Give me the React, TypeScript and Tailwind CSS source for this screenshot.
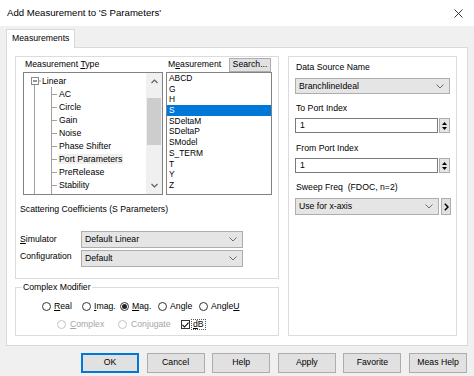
import React from "react";

function Chevron() {
  return (
    <svg width="8" height="5" viewBox="0 0 8 5">
      <path d="M0.5 0.5 L4 4 L7.5 0.5" fill="none" stroke="#6d6d6d" strokeWidth="1" />
    </svg>
  );
}

function Combo({ children, className = "" }: { children: React.ReactNode; className?: string }) {
  return (
    <div
      className={`flex items-center justify-between border border-[#adadad] bg-[#e5e5e5] pl-[3px] pr-[5px] ${className}`}
    >
      <span className="leading-none">{children}</span>
      <Chevron />
    </div>
  );
}

function Spin() {
  return (
    <div className="flex h-[15px] items-stretch gap-[1px]">
      <div className="w-[143px] border border-[#7a7a7a] bg-white pl-[4px] leading-[13px]">1</div>
      <div className="flex w-[11px] flex-col items-center justify-center gap-[2px] border border-[#adadad] bg-[#e5e5e5]">
        <svg width="5" height="3" viewBox="0 0 5 3">
          <path d="M0 3 L2.5 0 L5 3Z" fill="#000" />
        </svg>
        <svg width="5" height="3" viewBox="0 0 5 3">
          <path d="M0 0 L2.5 3 L5 0Z" fill="#000" />
        </svg>
      </div>
    </div>
  );
}

function Radio({ checked = false, disabled = false }: { checked?: boolean; disabled?: boolean }) {
  return (
    <span
      className={`flex h-[9px] w-[9px] shrink-0 items-center justify-center rounded-full border bg-white ${
        disabled ? "border-[#c4c4c4]" : "border-[#333333]"
      }`}
    >
      {checked && <span className="h-[5px] w-[5px] rounded-full bg-[#222222]" />}
    </span>
  );
}

const treeItems = [
  "AC",
  "Circle",
  "Gain",
  "Noise",
  "Phase Shifter",
  "Port Parameters",
  "PreRelease",
  "Stability",
  "TDR",
];

const measItems = ["ABCD", "G", "H", "S", "SDeltaM", "SDeltaP", "SModel", "S_TERM", "T", "Y", "Z"];

function Tree() {
  const rowH = 13;
  return (
    <div className="relative h-[123px] w-[140px] overflow-hidden border border-[#828282] bg-white">
      <svg className="absolute left-0 top-0" width="121" height="121" viewBox="0 0 121 121">
        <rect x="7.5" y="4.5" width="7" height="7" fill="#fff" stroke="#8a8a8a" />
        <line x1="9" y1="8" x2="13" y2="8" stroke="#333" />
        <line x1="15" y1="8" x2="17" y2="8" stroke="#a0a0a0" />
        <line x1="10.5" y1="12" x2="10.5" y2="121" stroke="#a0a0a0" />
        <line x1="27.5" y1="14" x2="27.5" y2="121" stroke="#a0a0a0" />
        {treeItems.map((_, i) => {
          const y = 1 + rowH * (i + 1) + 7;
          return <line key={i} x1="27.5" y1={y + 0.5} x2="33" y2={y + 0.5} stroke="#a0a0a0" />;
        })}
      </svg>
      <div className="relative pt-[1px]">
        <div className="h-[13px] pl-[18px] leading-[14px]">Linear</div>
        {treeItems.map((t) => (
          <div key={t} className="h-[13px] pl-[34px] leading-[14px]">
            <span className={t === "Port Parameters" ? "bg-[#f0f0f0] px-[1px]" : "px-[1px]"}>{t}</span>
          </div>
        ))}
      </div>
      <div className="absolute right-0 top-0 flex h-full w-[16px] flex-col items-center bg-[#f0f0f0]">
        <div className="flex h-[17px] items-center justify-center">
          <svg width="7" height="5" viewBox="0 0 7 5">
            <path d="M0.5 4 L3.5 1 L6.5 4" fill="none" stroke="#606060" strokeWidth="1.2" />
          </svg>
        </div>
        <div className="mt-[8px] h-[47px] w-[14px] bg-[#cdcdcd]" />
        <div className="flex-1" />
        <div className="flex h-[17px] items-center justify-center">
          <svg width="7" height="5" viewBox="0 0 7 5">
            <path d="M0.5 1 L3.5 4 L6.5 1" fill="none" stroke="#606060" strokeWidth="1.2" />
          </svg>
        </div>
      </div>
    </div>
  );
}

function MeasList() {
  return (
    <div className="h-[123px] w-[106px] overflow-hidden border border-[#828282] bg-white text-[8.4px]">
      {measItems.map((m) => (
        <div
          key={m}
          className={`h-[10.7px] pl-[2px] leading-[10.7px] ${m === "S" ? "bg-[#0078d7] text-white" : ""}`}
        >
          {m}
        </div>
      ))}
    </div>
  );
}

function Btn({ children, primary = false }: { children: React.ReactNode; primary?: boolean }) {
  return (
    <div
      className={`flex h-[20px] w-[58px] items-center justify-center bg-[#e1e1e1] ${
        primary ? "border-2 border-[#0078d7]" : "border border-[#adadad]"
      }`}
    >
      {children}
    </div>
  );
}

export default function App() {
  return (
    <div className="h-[376px] w-[474px] overflow-hidden bg-[#f0f0f0] font-['Liberation_Sans',Arial,sans-serif] text-[8.7px] text-black">
      {/* Title bar */}
      <div className="flex h-[26px] items-center justify-between bg-white pl-[7px] pr-[11px]">
        <span className="text-[9.6px]">Add Measurement to 'S Parameters'</span>
        <svg width="9" height="9" viewBox="0 0 9 9">
          <path d="M0.5 0.5 L8.5 8.5 M8.5 0.5 L0.5 8.5" stroke="#222" strokeWidth="0.9" />
        </svg>
      </div>

      <div className="px-[6px] pt-[3px]">
        {/* Tab */}
        <div className="relative z-10 -mb-px flex h-[19px] w-[69px] items-center border border-b-0 border-[#d9d9d9] bg-white pl-[5px]">
          Measurements
        </div>
        {/* Panel */}
        <div className="flex h-[299px] gap-[9px] border border-[#d9d9d9] bg-white pl-[8px] pt-[8px]">
          {/* Left column */}
          <div className="flex w-[264px] flex-col gap-[8px]">
            <div className="h-[223px] border border-[#dcdcdc]">
              <div className="ml-[7px] mt-[1px] flex h-[14px] items-center">
                <div className="w-[143px] pl-[2px]">
                  Measurement <u>T</u>ype
                </div>
                <div className="flex w-[106px] items-center justify-between">
                  <span className="pl-[2px]">
                    M<u>e</u>asurement
                  </span>
                  <div className="mr-[1px] flex h-[14px] w-[42px] items-center justify-center border border-[#adadad] bg-[#e1e1e1]">
                    Search...
                  </div>
                </div>
              </div>
              <div className="ml-[7px] flex gap-[3px]">
                <Tree />
                <MeasList />
              </div>
              <div className="mt-[9px] h-[11px] pl-[4px] leading-[11px]">Scattering Coefficients (S Parameters)</div>
              <div className="mt-[16px] flex h-[17px] items-center pl-[4px]">
                <span className="w-[61px]">
                  <u>S</u>imulator
                </span>
                <Combo className="h-[17px] w-[162px]">Default Linear</Combo>
              </div>
              <div className="mt-[2px] flex h-[17px] items-center pl-[4px]">
                <span className="w-[61px] -translate-y-[2px]">
                  Confi<u>g</u>uration
                </span>
                <Combo className="h-[17px] w-[162px]">Default</Combo>
              </div>
            </div>

            {/* Complex Modifier */}
            <div className="relative h-[49px] border border-[#dcdcdc]">
              <span className="absolute -top-[6px] left-[6px] bg-white px-[1px] leading-[11px]">Complex Modifier</span>
              <div className="flex h-[11px] items-center pl-[26px] pt-0 mt-[13px]">
                <div className="flex w-[40px] items-center gap-[3px]">
                  <Radio />
                  <span>
                    <u>R</u>eal
                  </span>
                </div>
                <div className="flex w-[38px] items-center gap-[3px]">
                  <Radio />
                  <span>
                    <u>I</u>mag.
                  </span>
                </div>
                <div className="flex w-[38px] items-center gap-[3px]">
                  <Radio checked />
                  <span>
                    <u>M</u>ag.
                  </span>
                </div>
                <div className="flex w-[41px] items-center gap-[3px]">
                  <Radio />
                  <span>Angle</span>
                </div>
                <div className="flex items-center gap-[3px]">
                  <Radio />
                  <span>
                    Angle<u>U</u>
                  </span>
                </div>
              </div>
              <div className="mt-[7px] flex h-[11px] items-center pl-[41px]">
                <div className="flex w-[61px] items-center gap-[4px] text-[#a6a6a6]">
                  <Radio disabled />
                  <span>
                    <u>C</u>omplex
                  </span>
                </div>
                <div className="flex w-[63px] items-center gap-[4px] text-[#a6a6a6]">
                  <Radio disabled />
                  <span>
                    Con<u>j</u>ugate
                  </span>
                </div>
                <div className="flex items-center gap-[1px]">
                  <span className="flex h-[9px] w-[9px] items-center justify-center border border-[#333] bg-white">
                    <svg width="7" height="6" viewBox="0 0 7 6">
                      <path d="M0.5 3 L2.6 5 L6.5 0.6" fill="none" stroke="#111" strokeWidth="1.1" />
                    </svg>
                  </span>
                  <span className="border border-dotted border-[#555] px-[1px] leading-[9px]">
                    <u>d</u>B
                  </span>
                </div>
              </div>
            </div>
          </div>

          {/* Right box */}
          <div className="h-[280px] w-[169px] border border-[#dcdcdc] pl-[6px] pt-[5px]">
            <div className="h-[11px] pl-[1px] leading-[11px]">Data Source Name</div>
            <Combo className="mt-[5px] h-[16px] w-[155px]">BranchlineIdeal</Combo>
            <div className="mt-[9px] h-[11px] pl-[1px] leading-[11px]">To Port Index</div>
            <div className="mt-[4px]">
              <Spin />
            </div>
            <div className="mt-[10px] h-[11px] pl-[1px] leading-[11px]">From Port Index</div>
            <div className="mt-[4px]">
              <Spin />
            </div>
            <div className="mt-[9px] h-[11px] pl-[1px] leading-[11px]">Sweep Freq&nbsp;&nbsp;(FDOC, n=2)</div>
            <div className="mt-[5px] flex h-[17px] items-stretch gap-[2px]">
              <Combo className="w-[144px]">Use for x-axis</Combo>
              <div className="flex w-[10px] items-center justify-center border border-[#adadad] bg-[#e1e1e1]">
                <svg width="5" height="8" viewBox="0 0 5 8">
                  <path d="M0.8 0.8 L4 4 L0.8 7.2" fill="none" stroke="#000" strokeWidth="1.5" />
                </svg>
              </div>
            </div>
          </div>
        </div>
      </div>

      {/* Buttons */}
      <div className="mt-[7px] flex justify-end gap-[7.6px] pr-[7px]">
        <Btn primary>OK</Btn>
        <Btn>Cancel</Btn>
        <Btn>Help</Btn>
        <Btn>Apply</Btn>
        <Btn>Favorite</Btn>
        <Btn>Meas Help</Btn>
      </div>
    </div>
  );
}
